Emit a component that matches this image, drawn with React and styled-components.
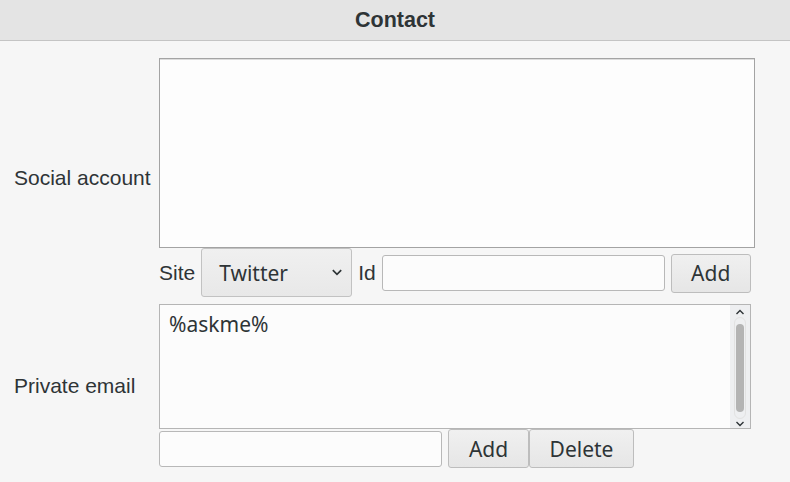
import styled, { createGlobalStyle } from 'styled-components';

const GlobalStyle = createGlobalStyle`
  html, body {
    margin: 0;
    padding: 0;
    background: #f6f6f6;
  }
  * {
    box-sizing: border-box;
  }
`;

const Page = styled.div`
  width: 790px;
  height: 482px;
  background: #f6f6f6;
  color: #2e3436;
  overflow: hidden;
`;

const TitleBar = styled.div`
  height: 41px;
  background: #e4e4e4;
  border-bottom: 1px solid #c4c4c4;
  display: flex;
  align-items: center;
  justify-content: center;
  font-family: "Liberation Sans", Arial, sans-serif;
  font-weight: bold;
  font-size: 21.5px;
  color: #2e3436;
`;

const Form = styled.div`
  display: grid;
  grid-template-columns: 159px 1fr;
  row-gap: 6px;
  padding-top: 17px;
`;

const Label = styled.div`
  display: flex;
  align-items: center;
  padding-left: 14px;
  font-family: "Liberation Sans", Arial, sans-serif;
  font-size: 21px;
  color: #2e3436;
`;

const Group = styled.div`
  display: flex;
  flex-direction: column;
`;

const ListBox = styled.div`
  width: 596px;
  height: 190px;
  background: #fdfdfd;
  border: 1px solid #a3a3a3;
  box-shadow: inset 0 1px 0 #dcdcdc;
`;

const Row = styled.div`
  display: flex;
  align-items: ${props => props.align || 'center'};
  gap: 6px;
  height: ${props => props.height}px;
`;

const InlineLabel = styled.span`
  align-self: center;
  font-family: "Liberation Sans", Arial, sans-serif;
  font-size: 21px;
  color: #2e3436;
`;

const SelectButton = styled.div`
  width: 151px;
  height: 49px;
  display: flex;
  align-items: center;
  justify-content: space-between;
  padding: 0 8px 0 17px;
  background: linear-gradient(#f0f0f0, #e8e8e8);
  border: 1px solid #c2c2c2;
  border-radius: 3px;
  font-family: "Noto Sans", "Open Sans", sans-serif;
  font-size: 21px;
  color: #2e3436;
`;

const TextInput = styled.div`
  align-self: center;
  width: ${props => props.width}px;
  height: 36px;
  background: #fcfcfc;
  border: 1px solid #b8b8b8;
  border-radius: 3px;
`;

const Button = styled.div`
  align-self: center;
  width: ${props => props.width}px;
  height: 39px;
  display: flex;
  align-items: center;
  justify-content: center;
  background: linear-gradient(#f0f0f0, #e6e6e6);
  border: 1px solid #bdbdbd;
  border-radius: 3px;
  font-family: "Noto Sans", "Open Sans", sans-serif;
  font-size: 21px;
  color: #2e3436;
  margin-left: ${props => props.ml || 0}px;
`;

const TextArea = styled.div`
  width: 592px;
  height: 125px;
  display: flex;
  background: #fcfcfc;
  border: 1px solid #b5b5b5;
`;

const TextContent = styled.div`
  flex: 1;
  padding: 5px 9px;
  font-family: "Noto Sans", "Open Sans", sans-serif;
  font-size: 21px;
  line-height: 28px;
  color: #2e3436;
`;

const ScrollBar = styled.div`
  width: 20px;
  display: flex;
  flex-direction: column;
  align-items: center;
  justify-content: space-between;
  background: #eeeff1;
  padding: 4px 0 1px;
`;

const ScrollTrack = styled.div`
  flex: 1;
  width: 12px;
  margin: 2px 0;
  border-radius: 6px;
  border: 1px solid #e2e2e2;
  display: flex;
  justify-content: center;
  padding: 6px 0;
`;

const Thumb = styled.div`
  width: 8px;
  height: 100%;
  border-radius: 4px;
  background: #b4b4b4;
`;

const Chevron = ({ up, size = 14 }) => (
  <svg width={size} height={size * 0.6} viewBox="0 0 10 6">
    <path
      d={up ? 'M1.5 5 L5 1.5 L8.5 5' : 'M1.5 1 L5 4.5 L8.5 1'}
      fill="none"
      stroke="#2e3436"
      strokeWidth="1.4"
    />
  </svg>
);

export default function App() {
  return (
    <Page>
      <GlobalStyle />
      <TitleBar>Contact</TitleBar>
      <Form>
        <Label>Social account</Label>
        <Group>
          <ListBox />
          <Row height={50} align="flex-start">
            <InlineLabel>Site</InlineLabel>
            <SelectButton>
              Twitter
              <Chevron size={12} />
            </SelectButton>
            <InlineLabel>Id</InlineLabel>
            <TextInput width={283} />
            <Button width={80}>Add</Button>
          </Row>
        </Group>

        <Label>Private email</Label>
        <Group>
          <TextArea>
            <TextContent>%askme%</TextContent>
            <ScrollBar>
              <Chevron up size={10} />
              <ScrollTrack>
                <Thumb />
              </ScrollTrack>
              <Chevron size={10} />
            </ScrollBar>
          </TextArea>
          <Row height={39}>
            <TextInput width={283} />
            <Button width={81}>Add</Button>
            <Button width={105} ml={-6}>Delete</Button>
          </Row>
        </Group>
      </Form>
    </Page>
  );
}
